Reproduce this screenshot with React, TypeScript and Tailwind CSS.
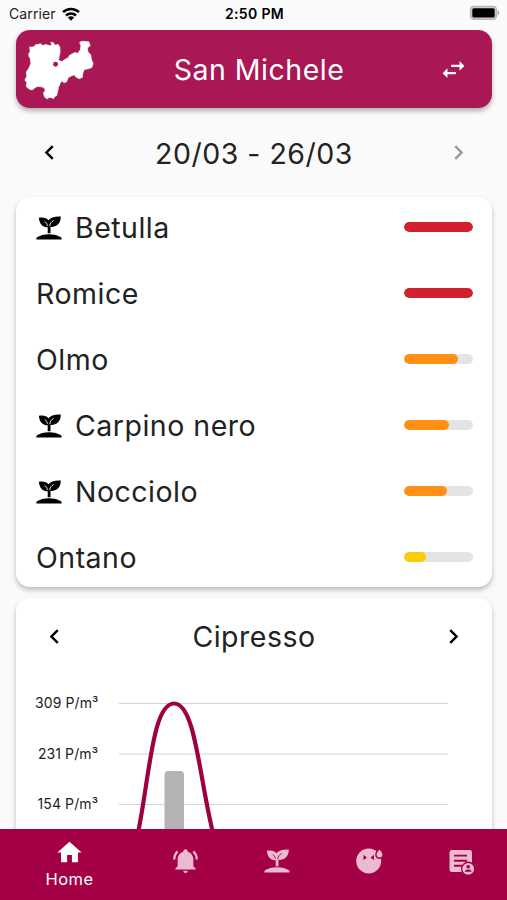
import React from 'react';

interface Pollen {
  name: string;
  flowering?: boolean;
  level: number;
  color: string;
}

const pollens: Pollen[] = [
  { name: 'Betulla', flowering: true, level: 100, color: 'bg-[#d3202e]' },
  { name: 'Romice', level: 100, color: 'bg-[#d3202e]' },
  { name: 'Olmo', level: 78, color: 'bg-[#ff9015]' },
  { name: 'Carpino nero', flowering: true, level: 65, color: 'bg-[#ff9015]' },
  { name: 'Nocciolo', flowering: true, level: 62, color: 'bg-[#ff9015]' },
  { name: 'Ontano', level: 32, color: 'bg-[#fccb07]' },
];

const axisLabels = ['309 P/m³', '231 P/m³', '154 P/m³'];

function Icon({ d, size = 'size-[29px]', className = '' }: { d: string; size?: string; className?: string }) {
  return (
    <svg viewBox="0 0 24 24" className={`shrink-0 fill-current ${size} ${className}`}>
      <path d={d} />
    </svg>
  );
}

const icons = {
  left: 'M15.41 7.41 14 6l-6 6 6 6 1.41-1.41L10.83 12z',
  right: 'M8.59 16.59 13.17 12 8.59 7.41 10 6l6 6-6 6z',
  swap: 'M21 9l-4-4v3h-7v2h7v3M7 11l-4 4 4 4v-3h7v-2H7v-3z',
  home: 'M10 20v-6h4v6h5v-8h3L12 3 2 12h3v8h5z',
  bell: 'M21 19v1H3v-1l2-2v-6c0-3.1 2.03-5.83 5-6.71V4a2 2 0 0 1 4 0v.29c2.97.88 5 3.61 5 6.71v6l2 2M14 21a2 2 0 0 1-4 0M19.75 3.19l-1.42 1.42A8.98 8.98 0 0 1 21 11h2c0-2.93-1.16-5.75-3.25-7.81M1 11h2c0-2.4.96-4.7 2.67-6.39L4.25 3.19A10.96 10.96 0 0 0 1 11z',
};

function SproutIcon({ className = '', vein = 'stroke-white' }: { className?: string; vein?: string }) {
  return (
    <svg viewBox="0 0 26 24" className={`h-6 w-[26px] shrink-0 fill-current ${className}`}>
      <path d="M.4 23.400v-1.600C4 19.400 8 18.300 13 18.300s9 1.100 12.600 3.500v1.600z" />
      <path d="M11.700 17.200v-6C7.500 12 3.400 8.400 2.900 1.800c4-.8 7.600-.2 9.500 2.500C14.500 1.500 18.500.2 24.800.5 24.800 7.500 20.500 11.300 14.500 11v6.200z" />
      <path d="M13.800 10.300c.2-2.800 1.400-4.500 3.800-5.800M11.400 9.800c-.3-1.900-1.100-3.300-2.700-4.200" fill="none" strokeWidth=".9" className={vein} />
    </svg>
  );
}

function ProvinceMap() {
  return (
    <svg viewBox="3 2 273 228" preserveAspectRatio="none" className="h-[75px] w-[90px] shrink-0">
      <path
        d="M42 66 46 62 44 48 58 47 62 41 78 38 84 43 94 40 106 44 112 40 108 34 116 34 121 42 131 40 136 48 137 62 134 76 132 88 142 92 154 84 162 80 164 74 174 68 182 64 190 67 198 56 200 44 196 34 203 30 224 32 228 44 220 50 221 62 230 72 232 86 237 98 233 110 222 114 210 116 206 126 204 140 194 144 184 138 180 132 170 136 162 140 156 154 148 156 142 150 136 160 132 170 130 180 126 196 120 198 118 204 104 200 98 206 90 200 86 188 92 178 86 170 76 168 66 168 52 178 44 176 34 168 36 156 30 148 36 136 34 124 42 112 48 98 46 82 42 76z"
        fill="#fff" stroke="#fff" strokeWidth="2" strokeLinejoin="round"
      />
      <circle cx="123" cy="100" r="7.500" fill="#a91755" />
    </svg>
  );
}

function StatusBar() {
  return (
    <div className="grid h-[30px] shrink-0 grid-cols-3 items-start pt-[5px] pr-[7px] pl-[9px] text-[14px] leading-[18px] text-[#222]">
      <div className="flex items-center gap-[6px]">
        <span className="tracking-[0.1px]">Carrier</span>
        <svg viewBox="0 0 18 14" className="h-[14px] w-[18px]">
          <path d="M1 5.200a11.500 11.500 0 0 1 16 0M4 8.500a7.200 7.200 0 0 1 10 0" fill="none" stroke="#000" strokeWidth="2.500" />
          <path d="M9 13.700 5.900 10.600a4.400 4.400 0 0 1 6.200 0z" />
        </svg>
      </div>
      <div className="text-center font-semibold tracking-[0.350px] text-black">2:50 PM</div>
      <div className="flex justify-end">
        <svg viewBox="0 0 31 15" className="h-[15px] w-[31px]">
          <rect x="1.500" y="1.300" width="26" height="13" rx="3.500" fill="#ccc" stroke="#b5b5b5" strokeWidth="1.300" />
          <rect x="3.300" y="3.200" width="22.400" height="9.300" rx="1.500" />
          <path d="M28.500 5.300c2.300.8 2.300 4.200 0 5z" fill="#aaa" />
        </svg>
      </div>
    </div>
  );
}

function PollenRow({ pollen }: { pollen: Pollen }) {
  return (
    <div className="flex h-[60px] items-center justify-between pr-[19px] pl-5">
      <div className="flex items-center gap-[13px] pt-[2px]">
        {pollen.flowering && <SproutIcon className="text-black" />}
        <span>{pollen.name}</span>
      </div>
      <div className="h-[10px] w-[69px] overflow-hidden rounded-full bg-[#e4e4e4]">
        <div className={`h-full rounded-full ${pollen.color}`} style={{ width: `${pollen.level}%` }} />
      </div>
    </div>
  );
}

function Chart() {
  return (
    <div className="flex pl-[19px]">
      <div className="flex w-[63px] shrink-0 flex-col gap-[32.500px] pt-[18px] text-right text-[14px] leading-[18px] tracking-[0.100px]">
        {axisLabels.map((label) => (
          <div key={label} className="whitespace-nowrap">{label}</div>
        ))}
      </div>
      <svg viewBox="0 0 330 160" className="ml-[21px] h-[160px] w-[330px]" fill="none">
        <path d="M0 27.500h329M0 78h329M0 128.500h329" stroke="#d3d3d3" strokeWidth="1.200" />
        <rect x="45.500" y="95" width="19.500" height="80" rx="4" fill="#b3b3b3" />
        <path d="M18 161 L19 157C30.500 101 33.500 27.500 55 27.500S80 101 94 157L95 161" stroke="#9d0140" strokeWidth="4.200" />
      </svg>
    </div>
  );
}

function BottomNav() {
  return (
    <nav className="flex h-[71px] shrink-0 bg-[#a40045] text-[#ebb9d0]">
      <div className="flex w-[139px] flex-col items-center pt-[9px] text-white">
        <Icon d={icons.home} />
        <span className="mt-[2px] text-[16.500px] leading-5 tracking-[0.500px]">Home</span>
      </div>
      <div className="flex flex-1 justify-center pt-[18px]">
        <Icon d={icons.bell} size="size-[27px]" />
      </div>
      <div className="flex flex-1 justify-center pt-[20px]">
        <SproutIcon vein="stroke-[#a40045]" />
      </div>
      <div className="flex flex-1 justify-center pt-[18px]">
        <svg viewBox="0 0 28 28" className="size-7">
          <circle cx="13.700" cy="14" r="12.500" fill="currentColor" />
          <path d="M24.500.5c-2.700 3-4.300 4.900-4.300 7.200a4.200 4.200 0 0 0 8.500 0C28.700 5.400 27 3 24.500.5z" fill="#a40045" />
          <path d="M24.500 2.500c-1.800 2.200-2.900 3.700-2.900 5.100a2.900 2.900 0 0 0 5.800 0c0-1.400-1.100-2.900-2.900-5.100z" fill="currentColor" />
          <path d="M8.500 7.800 11.800 10.500l-3.300 2.700zM18.900 7.800l-3.300 2.700 3.300 2.700z" fill="#a40045" />
        </svg>
      </div>
      <div className="flex flex-1 justify-center pt-[19px]">
        <svg viewBox="0 0 26 28" className="h-7 w-[26px]">
          <rect x="1.500" y="2" width="22.500" height="22" rx="2.500" fill="currentColor" />
          <path d="M6 7.600h13M6 12.700h13M6 17.800h8" stroke="#a40045" strokeWidth="1.900" />
          <circle cx="20.200" cy="20.800" r="7.200" fill="#a40045" />
          <circle cx="20.200" cy="20.800" r="5.900" fill="currentColor" />
          <circle cx="20.200" cy="18.700" r="1.800" fill="#a40045" />
          <path d="M16.700 23.700c.4-1.500 1.900-2.100 3.500-2.100s3.100.6 3.500 2.100z" fill="#a40045" />
        </svg>
      </div>
    </nav>
  );
}

export default function App() {
  return (
    <div className="flex h-[900px] w-[507px] flex-col overflow-hidden bg-[#fafafa] font-[Inter,sans-serif] text-[#222]">
      <StatusBar />

      <main className="flex min-h-0 flex-1 flex-col overflow-hidden pr-[15px] pl-4 text-[28.500px] leading-9 tracking-[0.500px]">
        <header className="grid h-[78px] shrink-0 grid-cols-[90px_1fr_90px] items-center rounded-[14px] bg-[#aa1755] text-white shadow-[0_3px_5px_rgba(0,0,0,0.3)]">
          <ProvinceMap />
          <h1 className="pt-[2px] pl-[10px] text-center">San Michele</h1>
          <Icon d={icons.swap} className="ml-[36.500px]" />
        </header>

        {/* Week selector */}
        <div className="flex h-[89px] shrink-0 items-center justify-between pr-[19px] pl-[19px]">
          <Icon d={icons.left} className="text-black" />
          <span className="pt-[2px]">20/03 - 26/03</span>
          <Icon d={icons.right} className="text-[#999]" />
        </div>

        {/* Pollen levels */}
        <section className="flex shrink-0 flex-col gap-[6px] rounded-[14px] bg-white shadow-[0_3px_5px_rgba(0,0,0,0.25)]">
          {pollens.map((pollen) => (
            <PollenRow key={pollen.name} pollen={pollen} />
          ))}
        </section>

        {/* Single pollen chart */}
        <section className="mt-[11px] h-[400px] shrink-0 rounded-[14px] bg-white shadow-[0_3px_5px_rgba(0,0,0,0.25)]">
          <div className="flex h-[77px] items-center justify-between px-6">
            <Icon d={icons.left} className="text-black" />
            <h2>Cipresso</h2>
            <Icon d={icons.right} className="text-black" />
          </div>
          <div className="pt-px">
            <Chart />
          </div>
        </section>
      </main>

      <BottomNav />
    </div>
  );
}
